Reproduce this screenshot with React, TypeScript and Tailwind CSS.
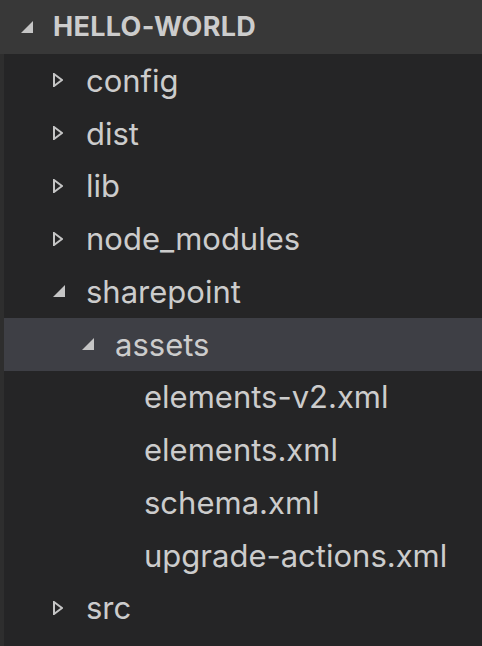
import React from "react";

const Collapsed = () => (
  <svg width="10" height="14" viewBox="0 0 10 14" className="shrink-0">
    <path d="M1 1 L9 7 L1 13 Z" fill="none" stroke="#c5c5c5" strokeWidth="2" strokeLinejoin="miter" />
  </svg>
);

const Expanded = () => (
  <svg width="12" height="12" viewBox="0 0 12 12" className="shrink-0">
    <path d="M12 0 L12 12 L0 12 Z" fill="#c5c5c5" />
  </svg>
);

type Item = { name: string; level: number; kind: "open" | "closed" | "file"; selected?: boolean };

const items: Item[] = [
  { name: "config", level: 0, kind: "closed" },
  { name: "dist", level: 0, kind: "closed" },
  { name: "lib", level: 0, kind: "closed" },
  { name: "node_modules", level: 0, kind: "closed" },
  { name: "sharepoint", level: 0, kind: "open" },
  { name: "assets", level: 1, kind: "open", selected: true },
  { name: "elements-v2.xml", level: 2, kind: "file" },
  { name: "elements.xml", level: 2, kind: "file" },
  { name: "schema.xml", level: 2, kind: "file" },
  { name: "upgrade-actions.xml", level: 2, kind: "file" },
  { name: "src", level: 0, kind: "closed" },
];

const pad = ["pl-[49px]", "pl-[78px]", "pl-[107px]"];

export default function App() {
  return (
    <div
      className="w-[482px] h-[646px] bg-[#252526] text-[#cccccc] overflow-hidden flex flex-col"
      style={{ fontFamily: "Inter, 'Noto Sans', sans-serif" }}
    >
      <div className="h-[54px] shrink-0 bg-[#383838] flex items-center pl-[21px]">
        <Expanded />
        <span className="ml-[20px] text-[27px] font-bold tracking-[0.3px] text-[#cccccc]">HELLO-WORLD</span>
      </div>
      <div className="flex-1 border-l-4 border-[#2e2e2e] flex flex-col">
        {items.map((it) => (
          <div
            key={it.name}
            className={`h-[52.75px] shrink-0 flex items-center ${pad[it.level]} ${it.selected ? "bg-[#3e3f45]" : ""}`}
          >
            <div className="w-[12px] flex items-center justify-start">
              {it.kind === "closed" && <Collapsed />}
              {it.kind === "open" && <Expanded />}
            </div>
            <span className="ml-[21px] text-[31px] leading-none">{it.name}</span>
          </div>
        ))}
      </div>
    </div>
  );
}
